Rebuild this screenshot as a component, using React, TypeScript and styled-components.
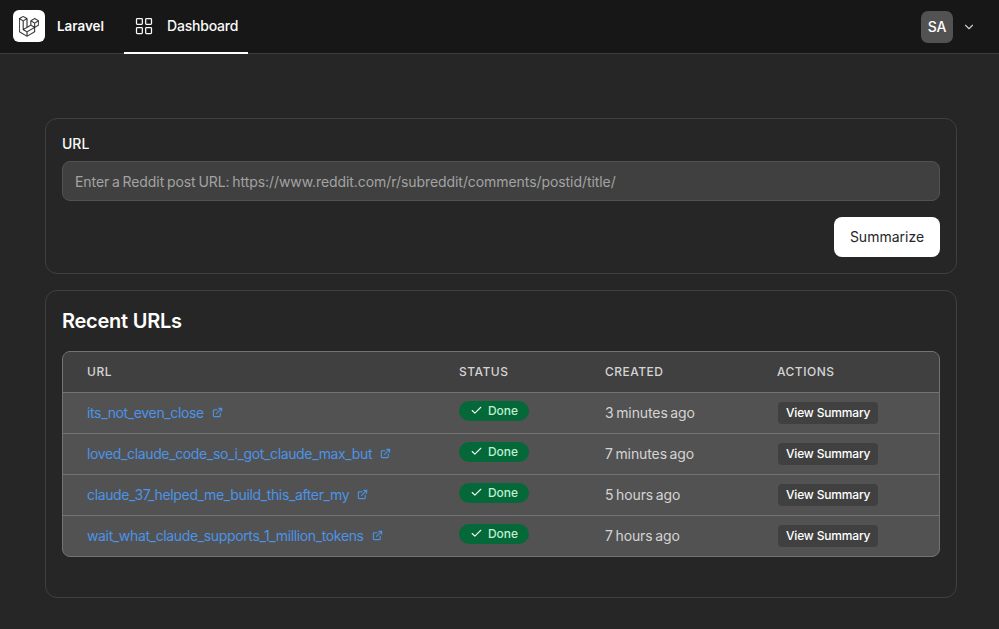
import React from 'react';
import styled, { createGlobalStyle } from 'styled-components';
import { Check, ChevronDown, ExternalLink, LayoutGrid } from 'lucide-react';

interface UrlRow {
  title: string;
  created: string;
}

const rows: UrlRow[] = [
  { title: 'its_not_even_close', created: '3 minutes ago' },
  { title: 'loved_claude_code_so_i_got_claude_max_but', created: '7 minutes ago' },
  { title: 'claude_37_helped_me_build_this_after_my', created: '5 hours ago' },
  { title: 'wait_what_claude_supports_1_million_tokens', created: '7 hours ago' },
];

const GlobalStyle = createGlobalStyle`
  html, body {
    margin: 0;
    height: 100%;
    background: #262626;
    font-family: Inter, "Liberation Sans", sans-serif;
    overflow: hidden;
  }
  * {
    box-sizing: border-box;
  }
`;

const Nav = styled.nav`
  display: flex;
  align-items: stretch;
  justify-content: space-between;
  height: 54px;
  padding: 0 23px 0 13px;
  background: #171717;
  border-bottom: 1px solid #3c3c3c;
`;

const NavLeft = styled.div`
  display: flex;
  align-items: stretch;
`;

const Brand = styled.div`
  display: flex;
  align-items: center;
  gap: 12px;
  width: 111px;
  padding-bottom: 1px;
  color: #fafafa;
  font-size: 13.4px;
  font-weight: 600;
`;

const LogoBox = styled.div`
  display: flex;
  align-items: center;
  justify-content: center;
  width: 32px;
  height: 32px;
  border-radius: 6px;
  background: #fff;
  color: #171717;
`;

const NavTab = styled.a`
  display: flex;
  align-items: center;
  gap: 13px;
  width: 124px;
  height: 54px;
  padding-left: 10px;
  padding-bottom: 1px;
  color: #fafafa;
  font-size: 14px;
  font-weight: 500;
  letter-spacing: -0.2px;
  border-bottom: 2px solid #fff;
`;

const UserMenu = styled.div`
  display: flex;
  align-items: center;
  gap: 9px;
  color: #c8c8c8;
`;

const Avatar = styled.div`
  display: flex;
  align-items: center;
  justify-content: center;
  width: 32px;
  height: 32px;
  border-radius: 7px;
  background: #525252;
  color: #fff;
  font-size: 14px;
  font-weight: 500;
  letter-spacing: -0.3px;
`;

const Main = styled.main`
  display: flex;
  flex-direction: column;
  gap: 16px;
  padding: 64px 42px 0 45px;
`;

const Card = styled.section`
  padding: 16px;
  border: 1px solid #404040;
  border-radius: 12px;
  background: #262626;
`;

const FormCard = styled(Card)`
  padding-top: 17px;
`;

const Label = styled.label`
  display: block;
  height: 15px;
  margin-bottom: 10px;
  color: #fafafa;
  font-size: 14px;
  line-height: 15px;
  font-weight: 500;
`;

const UrlInput = styled.input`
  display: block;
  width: 100%;
  height: 40px;
  padding: 0 12px;
  border: 1px solid #525252;
  border-radius: 8px;
  background: #404040;
  color: #fff;
  font-family: inherit;
  font-size: 14px;
  letter-spacing: -0.07px;
  word-spacing: -1.1px;
  outline: none;

  &::placeholder {
    color: #a3a3a3;
    opacity: 1;
  }
`;

const FormActions = styled.div`
  display: flex;
  justify-content: flex-end;
  margin-top: 16px;
`;

const PrimaryButton = styled.button`
  width: 106px;
  height: 40px;
  padding: 0 0 1px;
  border: none;
  border-radius: 8px;
  background: #fff;
  color: #262626;
  font-family: inherit;
  font-size: 14px;
  font-weight: 400;
`;

const RecentCard = styled(Card)`
  height: 308px;
`;

const Heading = styled.h2`
  margin: 0 0 16px;
  color: #fff;
  font-size: 20px;
  line-height: 28px;
  font-weight: 600;
  letter-spacing: -0.25px;
`;

const TableWrap = styled.div`
  overflow: hidden;
  border: 1px solid #737373;
  border-radius: 8px;
  background: #525252;
`;

const Table = styled.table`
  width: 100%;
  border-collapse: collapse;
  table-layout: fixed;
`;

const Th = styled.th<{ $width?: number }>`
  width: ${(p) => (p.$width ? `${p.$width}px` : 'auto')};
  height: 40px;
  padding: 0 24px;
  background: #404040;
  color: #d4d4d4;
  font-size: 12px;
  font-weight: 500;
  letter-spacing: 0.5px;
  text-align: left;
  text-transform: uppercase;
`;

const Tr = styled.tr`
  border-top: 1px solid #737373;
`;

const Td = styled.td`
  height: 41px;
  padding: 0 24px;
  color: #d4d4d4;
  font-size: 14px;
  letter-spacing: -0.1px;
  word-spacing: -1.2px;
  white-space: nowrap;
`;

const PostLink = styled.a`
  display: inline-flex;
  align-items: center;
  gap: 8px;
  color: #4b94e8;
  letter-spacing: -0.36px;
`;

const StatusBadge = styled.span`
  display: inline-flex;
  align-items: center;
  justify-content: center;
  gap: 5px;
  position: relative;
  top: -2px;
  width: 70px;
  height: 20px;
  border-radius: 10px;
  background: #056839;
  color: #bdf0d0;
  font-size: 12px;
  font-weight: 500;
  letter-spacing: 0;

  svg {
    color: #f0fdf4;
  }
`;

const SummaryButton = styled.button`
  height: 22px;
  margin-left: 1px;
  padding: 0 8px;
  border: none;
  border-radius: 4px;
  background: #404040;
  color: #fff;
  font-family: inherit;
  font-size: 12px;
  font-weight: 500;
  letter-spacing: -0.17px;
`;

const LaravelLogo = () => (
  <svg width="20" height="21" viewBox="0 0 50 52" fill="currentColor" stroke="currentColor" strokeWidth="0.7">
    <path d="M49.626 11.564a.809.809 0 0 1 .028.209v10.972a.8.8 0 0 1-.402.694l-9.209 5.302V39.25c0 .286-.152.55-.4.694L20.42 51.01c-.044.025-.092.041-.14.058-.018.006-.035.017-.054.022a.805.805 0 0 1-.41 0c-.022-.006-.042-.018-.063-.026-.044-.016-.09-.03-.132-.054L.402 39.944A.801.801 0 0 1 0 39.25V6.334c0-.072.01-.142.028-.21.006-.023.02-.044.028-.067.015-.042.029-.085.051-.124.015-.026.037-.047.055-.071.023-.032.044-.065.071-.093.023-.023.053-.04.079-.06.029-.024.055-.05.088-.069h.001l9.61-5.533a.802.802 0 0 1 .8 0l9.61 5.533h.002c.032.02.059.045.088.068.026.02.055.038.078.06.028.029.048.062.072.094.017.024.04.045.054.071.023.04.036.082.052.124.008.023.022.044.028.068a.809.809 0 0 1 .028.209v20.559l8.008-4.611v-10.51c0-.07.01-.141.028-.208.007-.024.02-.045.028-.068.016-.042.03-.085.052-.124.015-.026.037-.047.054-.071.024-.032.044-.065.072-.093.023-.023.052-.04.078-.06.03-.024.056-.05.088-.069h.001l9.611-5.533a.801.801 0 0 1 .8 0l9.61 5.533c.034.02.06.045.09.068.025.02.054.038.077.06.028.029.048.062.072.094.018.024.04.045.054.071.023.039.036.082.052.124.009.023.022.044.028.068zm-1.574 10.718v-9.124l-3.363 1.936-4.646 2.675v9.124l8.01-4.611zm-9.61 16.505v-9.13l-4.57 2.61-13.05 7.448v9.216l17.62-10.144zM1.602 7.719v31.068L19.22 48.93v-9.214l-9.204-5.209-.003-.002-.004-.002c-.031-.018-.057-.044-.086-.066-.025-.02-.054-.036-.076-.058l-.002-.003c-.026-.025-.044-.056-.066-.084-.02-.027-.044-.05-.06-.078l-.001-.003c-.018-.03-.029-.066-.042-.1-.013-.03-.03-.058-.038-.09v-.001c-.01-.038-.012-.078-.016-.117-.004-.03-.012-.06-.012-.09v-21.483L4.965 9.654 1.602 7.72zm8.81-5.994L2.405 6.334l8.005 4.609 8.006-4.61-8.005-4.608zm4.164 28.764l4.645-2.674V7.719l-3.363 1.936-4.646 2.675v20.096l3.364-1.937zM39.243 7.164l-8.006 4.609 8.006 4.609 8.005-4.61-8.005-4.608zm-.801 10.605l-4.646-2.675-3.363-1.936v9.124l4.645 2.674 3.364 1.937v-9.124zM20.02 38.33l11.743-6.704 5.87-3.35-8-4.606-9.211 5.303-8.395 4.833 7.993 4.524z" />
  </svg>
);

export default function App() {
  return (
    <>
      <GlobalStyle />
      <Nav>
        <NavLeft>
          <Brand>
            <LogoBox>
              <LaravelLogo />
            </LogoBox>
            Laravel
          </Brand>
          <NavTab>
            <LayoutGrid size={20} strokeWidth={1.5} />
            Dashboard
          </NavTab>
        </NavLeft>
        <UserMenu>
          <Avatar>SA</Avatar>
          <ChevronDown size={14} />
        </UserMenu>
      </Nav>
      <Main>
        <FormCard>
          <Label>URL</Label>
          <UrlInput placeholder="Enter a Reddit post URL: https://www.reddit.com/r/subreddit/comments/postid/title/" />
          <FormActions>
            <PrimaryButton>Summarize</PrimaryButton>
          </FormActions>
        </FormCard>
        <RecentCard>
          <Heading>Recent URLs</Heading>
          <TableWrap>
            <Table>
              <thead>
                <tr>
                  <Th $width={372}>URL</Th>
                  <Th $width={146}>Status</Th>
                  <Th $width={172}>Created</Th>
                  <Th>Actions</Th>
                </tr>
              </thead>
              <tbody>
                {rows.map((row) => (
                  <Tr key={row.title}>
                    <Td>
                      <PostLink>
                        {row.title}
                        <ExternalLink size={11} strokeWidth={2.4} />
                      </PostLink>
                    </Td>
                    <Td>
                      <StatusBadge>
                        <Check size={13} />
                        Done
                      </StatusBadge>
                    </Td>
                    <Td>{row.created}</Td>
                    <Td>
                      <SummaryButton>View Summary</SummaryButton>
                    </Td>
                  </Tr>
                ))}
              </tbody>
            </Table>
          </TableWrap>
        </RecentCard>
      </Main>
    </>
  );
}
